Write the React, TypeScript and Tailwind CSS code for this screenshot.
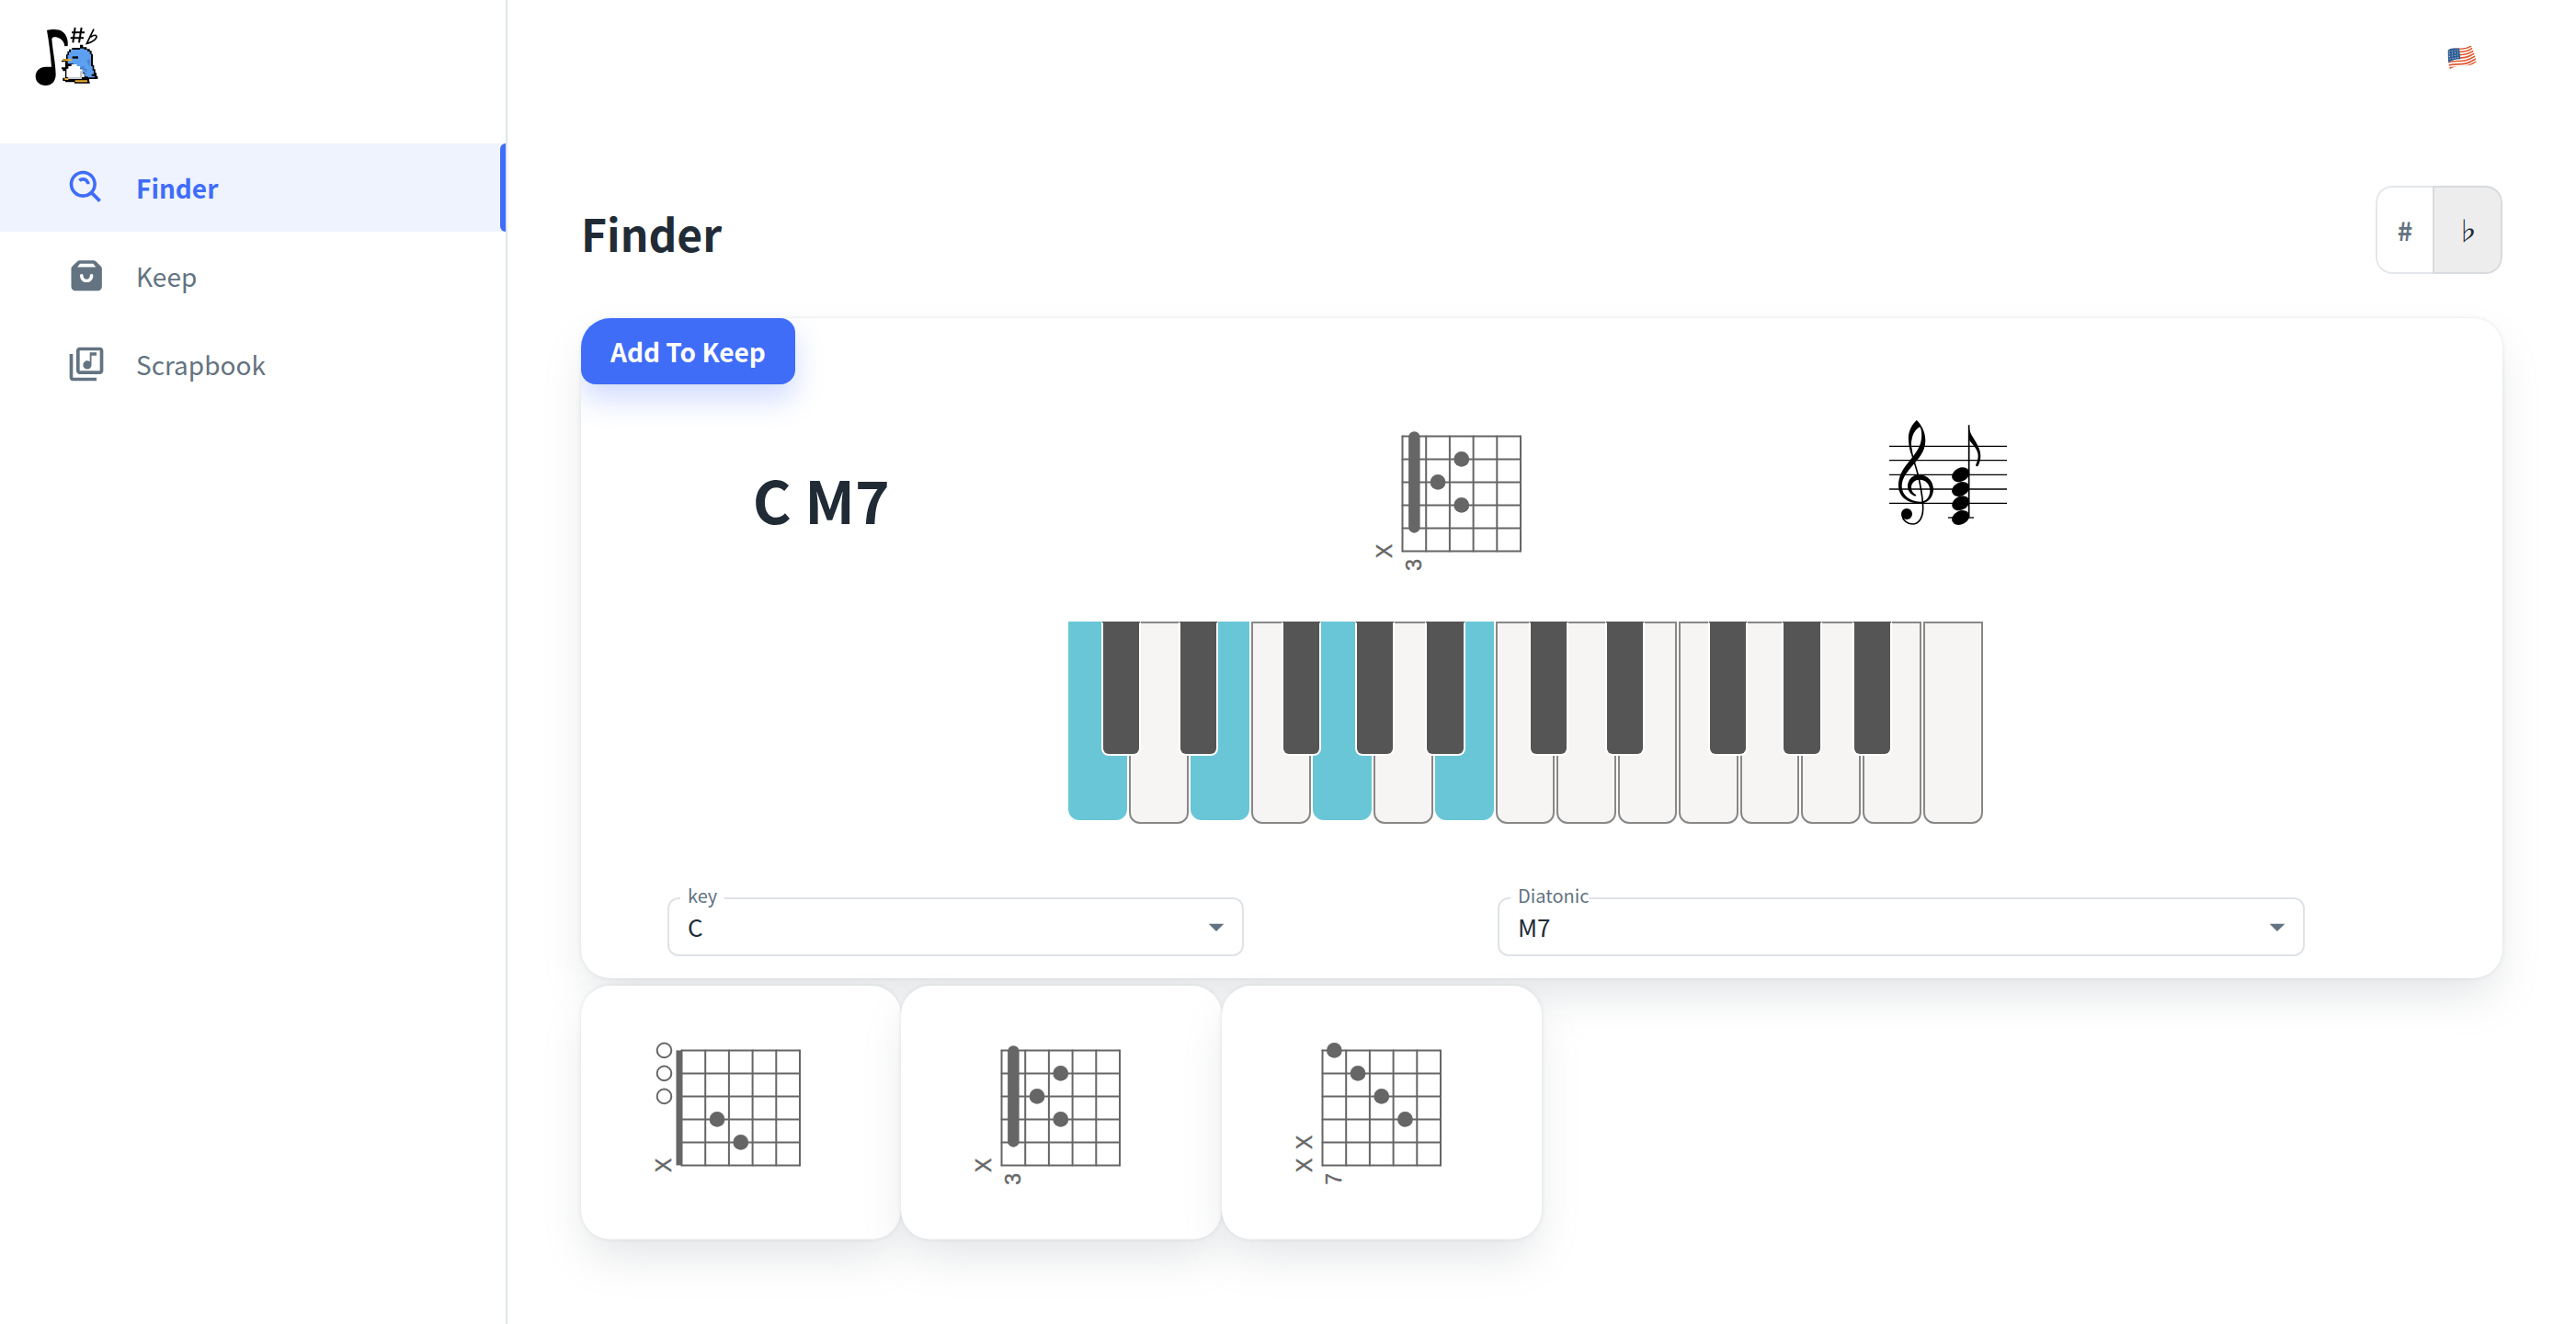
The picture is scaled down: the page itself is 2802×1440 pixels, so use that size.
import { useState } from "react";
import type { ReactNode } from "react";
import { BiSearchAlt } from "react-icons/bi";
import { MdOutlineLibraryMusic } from "react-icons/md";

type Chord = {
  dots: [number, number][];
  muted: number[];
  open?: number[];
  barre?: [number, number];
  baseFret?: number;
};

const CHORDS: Chord[] = [
  { dots: [[2, 4], [3, 5]], muted: [6], open: [1, 2, 3] },
  { dots: [[3, 2], [2, 3], [3, 4]], muted: [6], barre: [1, 5], baseFret: 3 },
  { dots: [[1, 1], [2, 2], [3, 3], [4, 4]], muted: [5, 6], baseFret: 7 },
];

const LEFT = 37.5;
const TOP = 34.4;
const FRET = 25.7;
const STRING = 25;
const STEPS = [0, 1, 2, 3, 4, 5];

function ChordDiagram({ chord }: { chord: Chord }) {
  const fx = (fret: number) => LEFT + (fret - 0.5) * FRET;
  const sy = (s: number) => TOP + (s - 1) * STRING;
  return (
    <svg viewBox="0 0 204 204" className="size-[204px]" role="img" aria-label="Guitar chord diagram">
      <g stroke="#666" strokeWidth="2" strokeLinecap="round">
        {STEPS.map((i) => (
          <line key={`s${i}`} x1={LEFT} x2={LEFT + 5 * FRET} y1={TOP + i * STRING} y2={TOP + i * STRING} />
        ))}
        {STEPS.map((i) => (
          <line key={`f${i}`} y1={TOP} y2={TOP + 5 * STRING} x1={LEFT + i * FRET} x2={LEFT + i * FRET} />
        ))}
      </g>
      {chord.open && <rect x={LEFT - 6} y={TOP} width="6.5" height={5 * STRING} fill="#666" />}
      {chord.barre && (
        <line
          x1={fx(1)}
          x2={fx(1)}
          y1={sy(chord.barre[0]) + 1}
          y2={sy(chord.barre[1]) - 1}
          stroke="#666"
          strokeWidth="12.5"
          strokeLinecap="round"
        />
      )}
      {chord.dots.map(([f, s]) => (
        <circle key={`${f}-${s}`} cx={fx(f)} cy={sy(s)} r="8.4" fill="#666" />
      ))}
      {chord.open?.map((s) => (
        <circle key={s} cx={LEFT - 19} cy={sy(s)} r="7.8" fill="none" stroke="#666" strokeWidth="2" />
      ))}
      <g
        fill="#666"
        stroke="#666"
        strokeWidth="0.4"
        fontSize="23"
        textAnchor="middle"
        className="font-['Liberation_Sans']"
      >
        {chord.muted.map((s) => (
          <text key={s} transform={`translate(${LEFT - 12} ${sy(s)}) rotate(-90)`}>
            X
          </text>
        ))}
        {chord.baseFret && (
          <text transform={`translate(${fx(1) + 7.5} ${sy(6) + 15}) rotate(-90)`}>{chord.baseFret}</text>
        )}
      </g>
    </svg>
  );
}

function Staff() {
  return (
    <svg viewBox="108 75 384 360" className="h-[120px] w-[128px]" role="img" aria-label="C M7 in staff notation">
      <g stroke="#000" strokeWidth="4">
        {[169, 215, 262, 309, 355].map((y) => (
          <line key={y} x1="108" x2="492" y1={y} y2={y} />
        ))}
        <line x1="300" x2="384" y1="402" y2="402" />
        <line x1="368" x2="368" y1="100" y2="400" strokeWidth="5" />
      </g>
      <path d="M197 84C180 100 168 125 171 150C172 165 175 180 178 192L184 190C180 170 178 160 182 145C186 125 198 110 208 106C214 115 215 135 212 150C208 178 185 202 170 222C150 246 138 268 138 298C138 335 170 357 210 356C235 355 252 335 252 310C252 283 233 262 205 262C183 262 168 280 168 300C168 315 178 327 193 332L196 328C185 322 179 312 180 302C181 288 192 278 207 278C228 279 240 293 241 312C241 335 228 350 208 350C175 350 148 328 149 298C150 272 165 255 182 235C200 212 226 190 226 150C226 120 210 95 197 84Z" />
      <path
        d="M175 160C180 200 200 245 207 285C213 315 219 345 218 375C217 405 203 423 184 423C166 423 152 410 150 394"
        fill="none"
        stroke="#000"
        strokeWidth="5"
      />
      <circle cx="165" cy="390" r="18" />
      {[262, 309, 355, 402].map((y) => (
        <ellipse key={y} cx="341" cy={y} rx="30" ry="22" transform={`rotate(-27 341 ${y})`} />
      ))}
      <path d="M369 112C374 140 406 165 406 200C406 215 401 228 397 234C392 237 388 232 392 226C399 210 401 195 392 180C385 167 372 155 369 148Z" />
    </svg>
  );
}

const ACTIVE_WHITE = [0, 2, 4, 6];
const BLACK_KEYS = [0.55, 1.81, 3.5, 4.71, 5.86, 7.55, 8.81, 10.5, 11.71, 12.86];

function Piano() {
  return (
    <div className="relative mt-8 ml-[25.35%] h-[220px] w-[47.6%]">
      <div className="grid h-full grid-cols-15 items-start gap-0.5">
        {Array.from({ length: 15 }, (_, i) => (
          <button
            key={i}
            type="button"
            aria-label={`White key ${i + 1}`}
            className={
              ACTIVE_WHITE.includes(i)
                ? "h-[216px] rounded-b-xl bg-[#69c6d7]"
                : "h-full rounded-b-xl border-2 border-[#888] bg-[#f6f5f3]"
            }
          />
        ))}
      </div>
      {BLACK_KEYS.map((at, i) => (
        <button
          key={at}
          type="button"
          aria-label={`Black key ${i + 1}`}
          className="absolute top-0 h-[146px] w-[4.33%] rounded-b-lg border-2 border-white border-t-[#555] bg-[#555]"
          style={{ left: `${(at / 15) * 100}%` }}
        />
      ))}
    </div>
  );
}

function Logo() {
  return (
    <svg viewBox="51 42 207 198" className="h-[66px] w-[69px]" role="img" aria-label="Logo">
      <path d="M90 57C105 54 126 51 142 62C155 72 160 90 158 108L148 109C146 94 138 84 120 79C113 78 108 80 106 84C108 120 118 160 119 200C119 222 106 237 86 237C66 237 53 224 53 207C53 190 67 176 86 176C94 176 100 176 105 176C102 136 97 96 90 57Z" />
      <g stroke="#000" strokeWidth="6" fill="none">
        <path d="M182 48L175 97M203 48L195 97M171 64H213M167 82H210" />
        <path d="M243 53L220 100C240 96 256 82 251 75C247 69 237 76 230 80" strokeWidth="5" />
      </g>
      <path d="M153 136H157V126H162V119H172V114H198V104H208V112H220V118H230V124H236V134H240V170H244V184H248V196H252V206H256V216H228V224H230V230H180V226H150V222H142V212H150V190H142V184H138V178H150V160H138V155H143V150H153Z" />
      <path d="M158 138H162V128H168V120H198V116H212V120H222V126H230V134H234V174H239V188H243V200H236V206H246V211H224V208H214V196H206V182H196V174H176V166H158Z" fill="#5d9ff0" />
      <path d="M222 152H230V172H226V164H222ZM202 174H212V182H220V192H214V186H206V180H202Z" fill="#4a84cf" />
      <path d="M160 174H170V168H188V174H198V184H206V198H212V210H204V216H160V210H154V182H160Z" fill="#fff" />
      <path d="M160 210H204V216H160ZM198 190H206V210H198Z" fill="#c5c8cc" />
      <path d="M142 151H172V157H142ZM148 213H160V219H148ZM182 220H222V226H182Z" fill="#eeb02d" />
      <path d="M173 142H192V149H173Z" />
    </svg>
  );
}

function Flag() {
  const stripes = [7, 13.5, 20, 26.5, 33, 39.5, 46];
  return (
    <svg viewBox="0 0 96 82" className="h-[27px] w-8" aria-hidden="true">
      <clipPath id="flag">
        <path d="M1 18C18 3 48 20 78 1C84 16 92 36 96 55C70 80 40 56 8 81C2 58 1 38 1 18Z" />
      </clipPath>
      <g clipPath="url(#flag)">
        <path d="M0 0H96V82H0Z" fill="#fff" />
        <g fill="none" stroke="#e0582f" strokeWidth="5">
          {stripes.map((y) => (
            <path key={y} transform={`translate(0 ${(y - 7) * 1.56})`} d="M-2 20C18 4 48 22 78 3L100 -8" />
          ))}
        </g>
        <path d="M0 0H38L43 46C26 46 14 50 3 58L0 60Z" fill="#2d5d93" />
        <g stroke="#cfe0f0" strokeWidth="3" strokeDasharray="3 6">
          <path d="M5 22L38 16M6 30L38 24M5 38L40 32M7 46L40 40" />
        </g>
      </g>
    </svg>
  );
}

function BagIcon() {
  return (
    <svg viewBox="0 0 24 24" className="size-11" fill="currentColor" aria-hidden="true">
      <path
        fillRule="evenodd"
        d="M8 2.9C7.4 2.9 7 3.1 6.6 3.4L3.7 6.3C3.2 6.8 3 7.2 3 7.8V18.4C3 19.8 4.1 20.9 5.5 20.9H18.7C20.1 20.9 21.2 19.8 21.2 18.4V7.8C21.2 7.2 21 6.8 20.5 6.3L17.6 3.4C17.2 3.1 16.8 2.9 16.2 2.9ZM8.2 4.8H16L17.6 6.8H6.6ZM8.2 11.8C8.2 10.6 10.1 10.6 10.1 11.8C10.1 14.8 14.1 14.8 14.1 11.8C14.1 10.6 16 10.6 16 11.8C16 17.2 8.2 17.2 8.2 11.8Z"
      />
    </svg>
  );
}

function NavItem({ icon, label, active }: { icon: ReactNode; label: string; active?: boolean }) {
  return (
    <a
      href="#"
      aria-current={active ? "page" : undefined}
      className={
        active
          ? "relative flex h-24 items-center gap-8 bg-[#eff3fe] pl-[72px] font-bold text-[#3f6df8]"
          : "relative flex h-24 items-center gap-8 pl-[72px] text-[#637381]"
      }
    >
      {icon}
      <span>{label}</span>
      {active && <span className="absolute inset-y-0 right-0 w-1.5 rounded-l-md bg-[#3f6df8]" />}
    </a>
  );
}

function Field({
  id,
  label,
  options,
  layout,
  labelPad,
}: {
  id: string;
  label: string;
  options: string[];
  layout: string;
  labelPad: string;
}) {
  return (
    <div className={`relative ${layout}`}>
      <select
        id={id}
        className="h-16 w-full appearance-none rounded-xl border-2 border-[#dfe3e8] bg-white px-5 pb-0.5 text-[26px] text-[#212b36]"
      >
        {options.map((o) => (
          <option key={o}>{o}</option>
        ))}
      </select>
      <label
        htmlFor={id}
        className={`absolute -top-4 left-3.5 bg-white pl-2 text-[20px] leading-7 text-[#637381] ${labelPad}`}
      >
        {label}
      </label>
      <svg viewBox="0 0 24 24" className="pointer-events-none absolute top-3 right-2.5 size-10" fill="#637381" aria-hidden="true">
        <path d="M7 10l5 5 5-5z" />
      </svg>
    </div>
  );
}

const CARD =
  "rounded-[32px] bg-white shadow-[0_0_4px_rgba(145,158,171,0.24),0_24px_48px_-8px_rgba(130,138,148,0.24)]";

export default function App() {
  const [accidental, setAccidental] = useState("flat");
  return (
    <div className="flex min-h-screen bg-white font-['Noto_Sans_CJK_JP',sans-serif] text-[28px] text-[#212b36]">
      <aside className="w-[552px] shrink-0 border-r-2 border-[#dfe5ea]">
        <a href="#" className="flex h-[156px] items-start pt-7 pl-[38px]">
          <Logo />
        </a>
        <nav>
          <NavItem icon={<BiSearchAlt className="size-11" />} label="Finder" active />
          <NavItem icon={<BagIcon />} label="Keep" />
          <NavItem icon={<MdOutlineLibraryMusic className="size-11" />} label="Scrapbook" />
        </nav>
      </aside>

      <main className="min-w-0 flex-1 px-20">
        <header className="flex h-[124px] items-center justify-end">
          <button type="button" aria-label="Language: English" className="p-7">
            <Flag />
          </button>
        </header>

        <div className="mt-[78px] flex items-end justify-between">
          <h1 className="text-[48px] leading-[90px] font-bold">Finder</h1>
          <div className="flex h-24 overflow-hidden rounded-[18px]">
            <button
              type="button"
              aria-pressed={accidental === "sharp"}
              onClick={() => setAccidental("sharp")}
              className="w-[62px] rounded-l-[18px] border-2 border-r-0 border-[#e3e7eb] font-bold text-[#637381]"
            >
              #
            </button>
            <button
              type="button"
              aria-pressed={accidental === "flat"}
              onClick={() => setAccidental("flat")}
              className="w-[76px] rounded-r-[18px] border-2 border-[#d7dade] bg-[#ededed]"
            >
              ♭
            </button>
          </div>
        </div>

        <section className={`mt-12 overflow-hidden pb-6 ${CARD}`}>
          <button
            type="button"
            className="block h-[72px] rounded-2xl bg-[#3f6df8] px-8 font-bold text-white shadow-[0_16px_32px_rgba(63,109,248,0.24)]"
          >
            Add To Keep
          </button>
          <div className="mt-[22px] grid grid-cols-[3fr_5fr_4fr]">
            <h2 className="self-center text-center text-[64px] leading-[96px] font-bold">C M7</h2>
            <div className="flex justify-center">
              <ChordDiagram chord={CHORDS[1]} />
            </div>
            <div className="pt-3.5 pl-[30px]">
              <Staff />
            </div>
          </div>
          <Piano />
          <div className="mt-20 flex">
            <Field
              id="key"
              label="key"
              options={["C", "D", "E", "F", "G", "A", "B"]}
              layout="ml-[4.5%] w-[30%]"
              labelPad="pr-2"
            />
            <Field
              id="diatonic"
              label="Diatonic"
              options={["M7", "7", "m7"]}
              layout="ml-[13.2%] w-[42%]"
              labelPad="pr-0"
            />
          </div>
        </section>

        <ul className="mt-2 grid grid-cols-6 pb-20">
          {CHORDS.map((chord, i) => (
            <li key={i} className={`flex justify-center py-9 ${CARD}`}>
              <ChordDiagram chord={chord} />
            </li>
          ))}
        </ul>
      </main>
    </div>
  );
}
